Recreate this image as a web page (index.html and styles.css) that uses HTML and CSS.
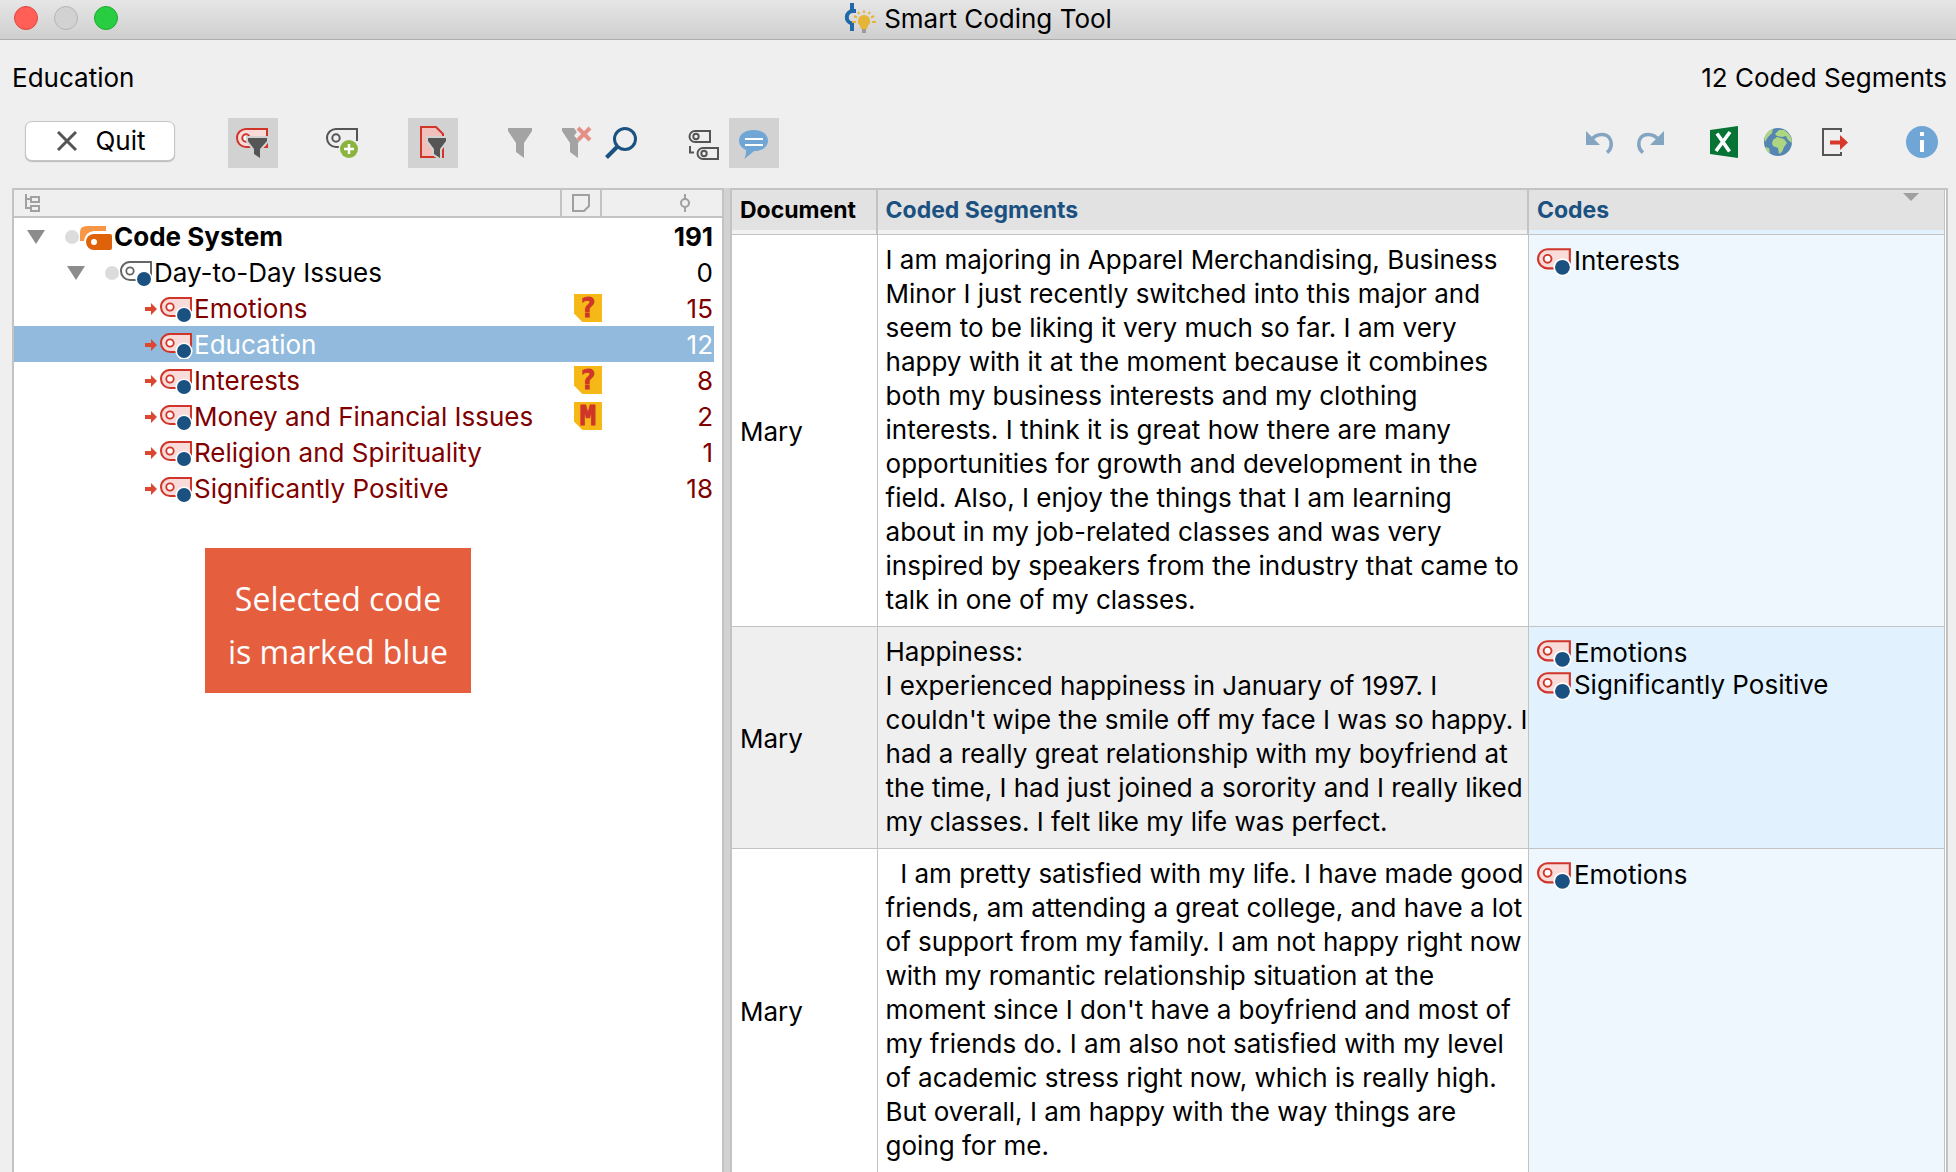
FILE: index.html
```html
<!DOCTYPE html>
<html lang="en">
<head>
<meta charset="utf-8">
<title>Smart Coding Tool</title>
<link rel="stylesheet" href="styles.css">
</head>
<body>
<svg class="sprite" aria-hidden="true">
  <symbol id="tag" viewBox="0 0 34 26">
    <path d="M11 1H31V19H10A9 9 0 0 1 1 10A9 9 0 0 1 11 1Z" fill="var(--tag-fill)" stroke="var(--tag-line)" stroke-width="2"/>
    <circle cx="10" cy="10" r="3.7" fill="#fff" stroke="var(--tag-line)" stroke-width="1.8"/>
    <circle cx="24" cy="18" r="8.6" fill="#fff"/>
    <circle cx="24" cy="18" r="7" fill="#1b5180"/>
  </symbol>
  <symbol id="triangle" viewBox="0 0 18 14"><path d="M0 0H18L9 14Z" fill="#8c8c8c"/></symbol>
  <symbol id="arrow" viewBox="0 0 14 14"><path d="M0 5H6V1L12 7L6 13V9H0Z" fill="#dc4731"/></symbol>
</svg>

<header class="titlebar">
  <div class="lights">
    <button class="light light-close" aria-label="Close"></button>
    <button class="light light-min" aria-label="Minimize" disabled></button>
    <button class="light light-max" aria-label="Zoom"></button>
  </div>
  <svg class="app-icon" viewBox="0 0 32 32" width="32" height="32" aria-hidden="true">
    <path d="M8 0V8M8 20V28" stroke="#2168a8" stroke-width="4"/>
    <path d="M12 8H9A6.300 6.300 0 0 0 8 20.500" fill="none" stroke="#2168a8" stroke-width="4"/>
    <path d="M20 12a6.200 6.200 0 0 1 4 10.800L23 26H17L16 22.800A6.200 6.200 0 0 1 20 12Z" fill="#e6b537"/>
    <path d="M20 7.500V10M14 9L15.500 11M26 9L24.500 11M10 13L13 14.500M30 13L27 14.500M8 19H12M28 19H32" stroke="#e6b537" stroke-width="2"/>
    <path d="M18 26H22V30H18Z" fill="#9b9b9b"/>
  </svg>
  <h1 class="title">Smart Coding Tool</h1>
</header>

<div class="summary">
  <span>Education</span>
  <span>12 Coded Segments</span>
</div>

<div class="toolbar" role="toolbar">
  <button class="quit">
    <svg viewBox="0 0 20 20" width="20" height="20" aria-hidden="true"><path d="M1 1L19 19M19 1L1 19" stroke="#555" stroke-width="3"/></svg>
    Quit
  </button>
  <button class="tool active" aria-label="Only activated codes">
    <svg viewBox="0 0 50 50"><path d="M19 11H39V29H18A9 9 0 0 1 9 20A9 9 0 0 1 19 11Z" fill="#f9dcda" stroke="#d0352a" stroke-width="2"/><circle cx="18" cy="20" r="3.700" fill="#fff" stroke="#d0352a" stroke-width="2"/><path d="M20 20H39V23L32 31V40L26 36V31L20 23Z" fill="#555" stroke="#d2d2d2" stroke-width="4" paint-order="stroke"/></svg>
  </button>
  <button class="tool" aria-label="New code">
    <svg viewBox="0 0 50 50"><path d="M39 23V11H19A9 9 0 0 0 9 20A9 9 0 0 0 18 29H23" fill="none" stroke="#555" stroke-width="2"/><circle cx="18" cy="20" r="3.700" fill="none" stroke="#555" stroke-width="2"/><circle cx="31" cy="31" r="10.500" fill="#efefef"/><circle cx="31" cy="31" r="9" fill="#8bb43e"/><path d="M31 26V36M26 31H36" stroke="#fff" stroke-width="2.500"/></svg>
  </button>
  <button class="tool active" aria-label="Only activated documents">
    <svg viewBox="0 0 50 50"><path d="M13 9H28L35 16V39H13Z" fill="#f1bfbc" stroke="#d0352a" stroke-width="2"/><path d="M20 20H38V23L32 31V40L26 36V31L20 23Z" fill="#555" stroke="#d2d2d2" stroke-width="4" paint-order="stroke"/></svg>
  </button>
  <div class="tool-group filters">
    <button class="tool" aria-label="Filter"><svg viewBox="0 0 50 50"><path d="M13 10H37V13L29 25V40L21 34V25L13 13Z" fill="#a3a3a3"/></svg></button>
    <button class="tool" aria-label="Reset filter"><svg viewBox="0 0 50 50"><path d="M16 10H28L31 14L28 18L34 22L32 25V40L24 34V25L16 13Z" fill="#a3a3a3"/><path d="M32 10L44 22M44 10L32 22" stroke="#efefef" stroke-width="7"/><path d="M32 10L44 22M44 10L32 22" stroke="#e58f86" stroke-width="4"/></svg></button>
    <button class="tool" aria-label="Search"><svg viewBox="0 0 50 50"><circle cx="28" cy="21" r="10.500" fill="none" stroke="#1b5282" stroke-width="3"/><path d="M20.500 28.500L9.500 39.500" stroke="#1b5282" stroke-width="4"/></svg></button>
  </div>
  <div class="tool-group views">
    <button class="tool" aria-label="Show codes"><svg viewBox="0 0 50 50"><g fill="none" stroke="#555" stroke-width="2"><path d="M17 13H32V24H17A5.500 5.500 0 0 1 17 13ZM25 30H40V41H25A5.500 5.500 0 0 1 25 30Z"/><circle cx="18" cy="18.500" r="2.700"/><circle cx="26" cy="35.500" r="2.700"/><path d="M12 28V34.500H16"/></g></svg></button>
    <button class="tool active" aria-label="Show comments"><svg viewBox="0 0 50 50"><path d="M24.500 12C33 12 39 16.500 39 22.500C39 29 33 33 25 33C22 35.500 19 38.500 15 41C17 38 17 35 17 32C12.500 30 10 26.500 10 22.500C10 16.500 16 12 24.500 12Z" fill="#6fa6d6"/><path d="M16 21H34M16 27H34" stroke="#fff" stroke-width="2"/></svg></button>
  </div>
  <div class="tool-group history">
    <button class="tool" aria-label="Undo"><svg viewBox="0 0 50 50"><path d="M11 13V27H25Z" fill="#84a5c2"/><path d="M16 22C20 17 24 16.500 27 16.500C34 16.500 36.200 22 36.200 26C36.200 30 34 33 32 34.500" fill="none" stroke="#84a5c2" stroke-width="3.600"/></svg></button>
    <button class="tool" aria-label="Redo"><svg viewBox="0 0 50 50"><path d="M38 13V27H24Z" fill="#84a5c2"/><path d="M33 22C29 17 25 16.500 22 16.500C15 16.500 12.800 22 12.800 26C12.800 30 15 33 17 34.500" fill="none" stroke="#84a5c2" stroke-width="3.600"/></svg></button>
  </div>
  <div class="tool-group exports">
    <button class="tool" aria-label="Open as Excel table"><svg viewBox="0 0 50 50"><path d="M10 12L38 8V40L10 36Z" fill="#077335"/><path d="M17 15.500L29.500 33.500M30 14L16 33" stroke="#fff" stroke-width="3.600"/></svg></button>
    <button class="tool" aria-label="Open as HTML table"><svg viewBox="0 0 50 50"><circle cx="23" cy="24" r="14" fill="#5585b2"/><path d="M20 16L24 12L29 12C34 15 37 19 37 25L33 22L31 18L27 19L22 18Z M18 22L22 19L29 21L32 25L29 29L27 34L24 36L23 30L18 28L17 25Z M9.500 20C11 15 14 12 18 11L17 15L13 19L10 24Z M10 29L14 30L15 35C12.500 34 11 32 10 29Z" fill="#aed581"/></svg></button>
    <button class="tool" aria-label="Export"><svg viewBox="0 0 50 50"><path d="M31 14V11H13V37H31V34" fill="none" stroke="#555" stroke-width="2"/><path d="M20 22.500H30V17L38 24.500L30 32V26.500H20Z" fill="#d73a2b"/></svg></button>
  </div>
  <button class="tool info" aria-label="Info"><svg viewBox="0 0 50 50"><circle cx="25" cy="24" r="16" fill="#6fa6d6"/><path d="M23 14H27V18H23ZM23 22H27V34H23Z" fill="#fff"/></svg></button>
</div>

<main class="workspace">
  <section class="codes-panel" aria-label="Code System">
    <table class="tree">
      <colgroup><col><col class="col-memo"><col class="col-count"></colgroup>
      <thead>
        <tr>
          <th aria-label="Code"><svg class="head-tree" viewBox="0 0 16 18" width="16" height="18"><path d="M1 0V14H6M1 5H6M6 3H14V8H6ZM6 12H14V17H6Z" fill="none" stroke="#a0a0a0" stroke-width="2"/></svg></th>
          <th aria-label="Memo"><svg class="head-memo" viewBox="0 0 18 18" width="18" height="18"><path d="M1 1H17V12L12 17H1Z" fill="none" stroke="#a0a0a0" stroke-width="2"/></svg></th>
          <th aria-label="Coded segments"><svg class="head-count" viewBox="0 0 10 18" width="10" height="18"><path d="M5 0V5M5 13V18" stroke="#a0a0a0" stroke-width="2"/><circle cx="5" cy="9" r="4" fill="none" stroke="#a0a0a0" stroke-width="2"/></svg></th>
        </tr>
      </thead>
      <tbody>
        <tr class="root">
          <td><div class="node"><button class="toggle" aria-label="Collapse"><svg width="18" height="14"><use href="#triangle"/></svg></button><i class="bullet"></i><svg class="tag" viewBox="0 0 34 26" width="34" height="26"><path d="M0 16V7Q0 1 7 1H26V6H14Q5 7 4 16Z" fill="#f79646"/><path d="M14 9H30Q32 9 32 11V23Q32 25 30 25H14A8 8 0 0 1 14 9Z" fill="#de6209"/><circle cx="14" cy="17" r="3" fill="#fff"/></svg><span>Code System</span></div></td><td></td><td>191</td>
        </tr>
        <tr class="parent">
          <td><div class="node level-1"><button class="toggle" aria-label="Collapse"><svg width="18" height="14"><use href="#triangle"/></svg></button><i class="bullet"></i><svg class="tag tag-plain" width="34" height="26"><use href="#tag"/></svg><span>Day-to-Day Issues</span></div></td><td></td><td>0</td>
        </tr>
        <tr>
          <td><div class="node level-2"><svg width="14" height="14"><use href="#arrow"/></svg><svg class="tag" width="34" height="26"><use href="#tag"/></svg><span>Emotions</span></div></td><td><span class="memo">?</span></td><td>15</td>
        </tr>
        <tr class="selected">
          <td><div class="node level-2"><svg width="14" height="14"><use href="#arrow"/></svg><svg class="tag" width="34" height="26"><use href="#tag"/></svg><span>Education</span></div></td><td></td><td>12</td>
        </tr>
        <tr>
          <td><div class="node level-2"><svg width="14" height="14"><use href="#arrow"/></svg><svg class="tag" width="34" height="26"><use href="#tag"/></svg><span>Interests</span></div></td><td><span class="memo">?</span></td><td>8</td>
        </tr>
        <tr>
          <td><div class="node level-2"><svg width="14" height="14"><use href="#arrow"/></svg><svg class="tag" width="34" height="26"><use href="#tag"/></svg><span>Money and Financial Issues</span></div></td><td><span class="memo">M</span></td><td>2</td>
        </tr>
        <tr>
          <td><div class="node level-2"><svg width="14" height="14"><use href="#arrow"/></svg><svg class="tag" width="34" height="26"><use href="#tag"/></svg><span>Religion and Spirituality</span></div></td><td></td><td>1</td>
        </tr>
        <tr>
          <td><div class="node level-2"><svg width="14" height="14"><use href="#arrow"/></svg><svg class="tag" width="34" height="26"><use href="#tag"/></svg><span>Significantly Positive</span></div></td><td></td><td>18</td>
        </tr>
      </tbody>
    </table>
    <p class="callout">Selected code<br>is marked blue</p>
  </section>

  <div class="splitter" role="separator"></div>

  <section class="segments-panel" aria-label="Coded Segments">
    <table class="segments">
      <colgroup><col class="col-doc"><col class="col-text"><col class="col-codes"></colgroup>
      <thead>
        <tr><th>Document</th><th class="link-head">Coded Segments</th><th class="link-head"><div class="sort-head">Codes<svg viewBox="0 0 16 8" width="16" height="8" aria-hidden="true"><path d="M0 0H16L8 8Z" fill="#a0a0a0"/></svg></div></th></tr>
      </thead>
      <tbody>
        <tr>
          <td>Mary</td>
          <td>I am majoring in Apparel Merchandising, Business Minor I just recently switched into this major and seem to be liking it very much so far. I am very happy with it at the moment because it combines both my business interests and my clothing interests. I think it is great how there are many opportunities for growth and development in the field. Also, I enjoy the things that I am learning about in my job-related classes and was very inspired by speakers from the industry that came to talk in one of my classes.</td>
          <td><ul class="code-list"><li><svg class="tag" width="36" height="28"><use href="#tag"/></svg>Interests</li></ul></td>
        </tr>
        <tr>
          <td>Mary</td>
          <td>Happiness:<br>I experienced happiness in January of 1997. I couldn't wipe the smile off my face I was so happy. I had a really great relationship with my boyfriend at the time, I had just joined a sorority and I really liked my classes. I felt like my life was perfect.</td>
          <td><ul class="code-list"><li><svg class="tag" width="36" height="28"><use href="#tag"/></svg>Emotions</li><li><svg class="tag" width="36" height="28"><use href="#tag"/></svg>Significantly Positive</li></ul></td>
        </tr>
        <tr>
          <td>Mary</td>
          <td>&nbsp; I am pretty satisfied with my life. I have made good friends, am attending a great college, and have a lot of support from my family. I am not happy right now with my romantic relationship situation at the moment since I don't have a boyfriend and most of my friends do. I am also not satisfied with my level of academic stress right now, which is really high. But overall, I am happy with the way things are going for me.</td>
          <td><ul class="code-list"><li><svg class="tag" width="36" height="28"><use href="#tag"/></svg>Emotions</li></ul></td>
        </tr>
      </tbody>
    </table>
  </section>
</main>
</body>
</html>
```
FILE: styles.css
```css
* { box-sizing: border-box; }

:root {
  --line: #c3c3c3;
  --tag-fill: #f9dcda;
  --tag-line: #d0352a;
}

body {
  margin: 0;
  min-height: 100vh;
  display: flex;
  flex-direction: column;
  background: #efefef;
  color: #000;
  font: 26px/34px Inter, "Liberation Sans", sans-serif;
}

button {
  padding: 0;
  border: 0;
  background: none;
  color: inherit;
  font: inherit;
}

svg { display: block; flex: none; }
.sprite { position: absolute; width: 0; height: 0; }

/* Title bar */
.titlebar {
  position: relative;
  display: flex;
  align-items: center;
  justify-content: center;
  gap: 8px;
  height: 40px;
  padding-bottom: 2px;
  border-bottom: 1px solid #adadad;
  background: linear-gradient(#e6e6e6, #cfcfcf);
}
.lights { position: absolute; left: 14px; top: 6px; display: flex; gap: 16px; }
.light { width: 24px; height: 24px; border: 1px solid; border-radius: 50%; }
.light-close { background: #ff5f57; border-color: #e2463f; }
.light-min { background: #d2d2d2; border-color: #b4b4b4; }
.light-max { background: #28cd41; border-color: #1eab2f; }
.title { margin: 0; font-size: 26px; font-weight: 400; }

/* Summary line */
.summary { display: flex; justify-content: space-between; padding: 21px 9px 0 12px; }

/* Toolbar */
.toolbar { display: flex; padding: 23px 9px 0 25px; height: 93px; }
.quit {
  display: flex;
  align-items: center;
  justify-content: center;
  gap: 18px;
  width: 150px;
  height: 40px;
  margin: 3px 53px 0 0;
  padding-left: 3px;
  border: 1px solid #c4c4c4;
  border-radius: 7px;
  background: #fff;
  box-shadow: 0 1px 1px #b8b8b8;
}
.tool { width: 50px; height: 50px; margin-right: 40px; }
.tool.active { background: #d2d2d2; }
.tool-group { display: flex; gap: 1px; }
.tool-group .tool, .tool.info { margin-right: 0; }
.filters { margin-right: 31px; margin-left: -3px; }
.history { margin-left: auto; }
.exports { gap: 5px; margin: 0 37px 0 24px; }

/* Panels */
.workspace {
  flex: 1;
  display: grid;
  grid-template-columns: 712fr 6px 1218fr;
  padding: 0 8px 0 12px;
}
.splitter { background: #d2d2d2; }
.codes-panel {
  position: relative;
  border: 2px solid var(--line);
  border-bottom: 0;
  background: #fff;
}
.segments-panel {
  border: 2px solid var(--line);
  border-bottom: 0;
  padding-right: 1px;
  background: #fff;
}
table { width: 100%; border-spacing: 0; table-layout: fixed; }
th, td { padding: 0; text-align: left; }

/* Code tree */
.col-memo { width: 40px; }
.col-count { width: 120px; }
.tree th { height: 28px; border-bottom: 2px solid var(--line); background: #efefef; }
.tree th:not(:last-child) { border-right: 2px solid var(--line); }
.head-tree { margin-left: 11px; }
.head-memo { margin-left: 10px; }
.head-count { margin-left: 78px; }
.tree td { height: 36px; padding-top: 2px; color: #800000; }
.tree td:nth-child(2) { padding-top: 0; }
.tree td:last-child {
  padding-right: 1px;
  border-right: 8px solid #fff;
  text-align: right;
}
.tree .root td { color: #000; font-weight: 700; }
.tree .parent td { color: #000; }
.tree .selected td { background: #91badd; background-clip: padding-box; color: #fff; }
.node { display: flex; align-items: center; padding-left: 13px; white-space: nowrap; }
.level-1 { padding-left: 53px; }
.level-2 { padding-left: 131px; }
.node .tag { margin: 2px 0 0 1px; }
.toggle { margin-right: 20px; }
.bullet { width: 14px; height: 14px; border-radius: 50%; background: #dcdcdc; }
.tag-plain { --tag-fill: #fff; --tag-line: #666; }
.memo {
  display: block;
  width: 28px;
  height: 28px;
  margin-left: 12px;
  background: #f5b816;
  clip-path: polygon(0 0, 100% 0, 100% 100%, 30% 100%, 0 70%);
  color: #d0352a;
  font: 700 27px/28px "DejaVu Sans Mono", monospace;
  text-align: center;
  -webkit-text-stroke: 1px #d0352a;
}

.callout {
  position: absolute;
  left: 191px;
  top: 358px;
  width: 266px;
  margin: 0;
  padding: 24px 0 15px;
  background: #e55e3e;
  color: #fff;
  font: 32px/53px "Open Sans", "Noto Sans", sans-serif;
  text-align: center;
}

/* Segment table */
.col-doc { width: 12%; }
.col-text { width: 53.7%; }
.segments th {
  height: 45px;
  padding: 0 8px 4px;
  border-right: 2px solid var(--line);
  border-bottom: 1px solid var(--line);
  background: linear-gradient(#e2e2e2 40px, #f2f2f2 40px);
  font-size: 23px;
  font-weight: 700;
}
.segments th:last-child { border-right-width: 1px; background: linear-gradient(#e2e2e2 40px, #e1f2fe 40px); }
.segments .link-head { color: #1b5180; }
.sort-head { display: flex; justify-content: space-between; padding-right: 17px; }
.segments td {
  padding: 8px 0 9px 8px;
  border-right: 1px solid var(--line);
  border-bottom: 1px solid var(--line);
}
.segments td:first-child { padding: 11px 8px 8px; }
.segments tr:last-child td { border-bottom: 0; }
.segments td:nth-child(3) { background: #eef6fe; vertical-align: top; }
.segments tbody tr:nth-child(even) td { background: #efefef; }
.segments tbody tr:nth-child(even) td:nth-child(3) { background: #e1f2fe; }
.code-list { margin: 2px 0 0; padding: 0; list-style: none; }
.code-list li { display: flex; align-items: center; gap: 1px; height: 32px; }
.code-list .tag { margin-top: 2px; }
```
